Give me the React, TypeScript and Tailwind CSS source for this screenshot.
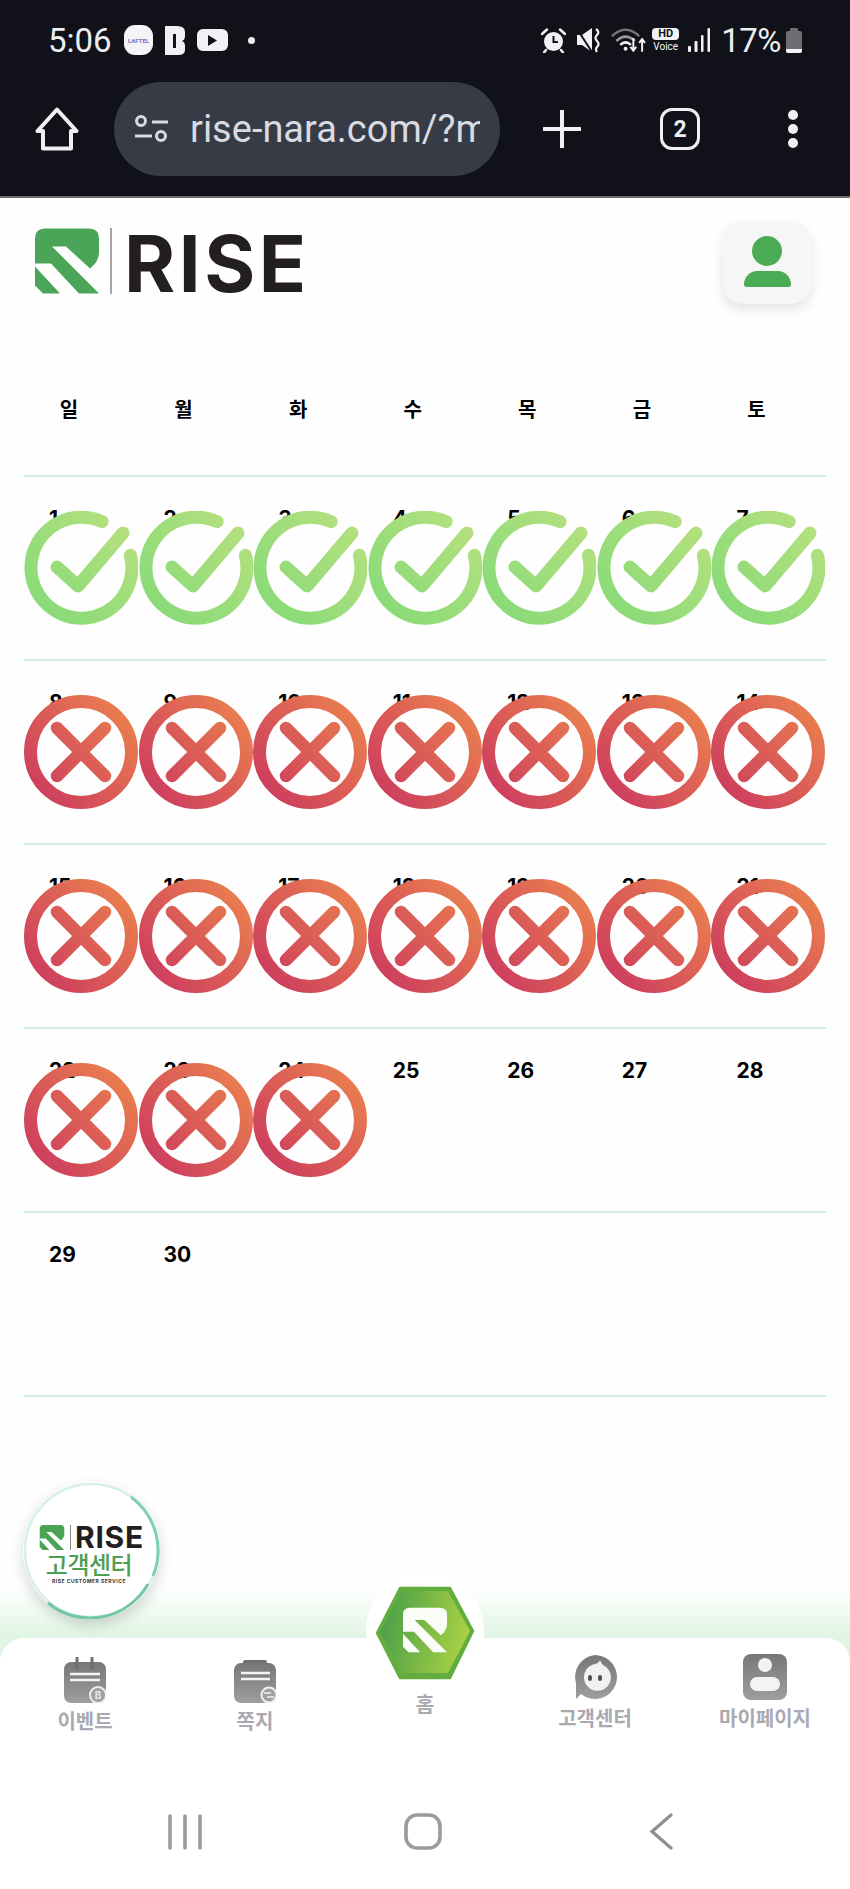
import type { ReactNode } from "react";

const kr = "font-['Noto_Sans_CJK_KR',sans-serif]";
const days = Array.from({ length: 35 }, (_, i) => (i < 30 ? i + 1 : null));
const weekdays = ["일", "월", "화", "수", "목", "금", "토"];
const weeks = [0, 1, 2, 3, 4].map((w) => days.slice(w * 7, w * 7 + 7));

const MARK =
  "M10 0H54Q64 0 64 10V24Q64 33 55 40L31 18H17L64 65H44L16 35H0V10Q0 0 10 0Z";
const MARK_FOOT = "M0 38L25 65H8L0 57Z";

function Mark({ className, fill }: { className: string; fill: string }) {
  return (
    <svg viewBox="0 0 64 65" className={className}>
      <path d={MARK} fill={fill} />
      <path d={MARK_FOOT} fill={fill} />
    </svg>
  );
}

function CheckIcon() {
  return (
    <svg viewBox="0 0 114 114" className="absolute left-0 top-[34px] w-[114px] h-[114px]">
      <defs>
        <linearGradient id="okGrad" gradientUnits="userSpaceOnUse" x1="10" y1="104" x2="104" y2="10">
          <stop offset="0" stopColor="#86da78" />
          <stop offset="1" stopColor="#b6e07e" />
        </linearGradient>
      </defs>
      <g fill="none" stroke="url(#okGrad)" strokeLinecap="round" strokeLinejoin="round">
        <path d="M78.2 10.6A50.5 50.5 0 1 0 106.4 44.2" strokeWidth="13" />
        <path d="M33 56L54 75L99 22" strokeWidth="13" />
      </g>
    </svg>
  );
}

function CrossIcon() {
  return (
    <svg viewBox="0 0 114 114" className="absolute left-0 top-[34px] w-[114px] h-[114px]">
      <defs>
        <linearGradient id="noGrad" gradientUnits="userSpaceOnUse" x1="14" y1="100" x2="104" y2="22">
          <stop offset="0" stopColor="#cd3d5e" />
          <stop offset="1" stopColor="#e97d4f" />
        </linearGradient>
      </defs>
      <g fill="none" stroke="url(#noGrad)" strokeLinecap="round">
        <circle cx="57" cy="57" r="50.5" strokeWidth="13" />
        <path d="M33 33L81 81M81 33L33 81" strokeWidth="12.5" />
      </g>
    </svg>
  );
}

function StatusBar() {
  return (
    <div className="h-[80px] flex items-center pl-[48px] pr-[48px] text-[#eceef2] font-[Roboto,sans-serif]">
      <span className="text-[33px] leading-none w-[76px]">5:06</span>
      {/* notification icons */}
      <div className="w-[29px] h-[30px] rounded-[11px] bg-[#f4f4f6] flex items-center justify-center">
        <span className="text-[6px] font-bold text-[#7a6fc4]">LAFTEL</span>
      </div>
      <svg viewBox="0 0 20 29" className="w-[20px] h-[29px] ml-[12px]">
        <path d="M0 0H12Q20 0 20 6V10Q20 14 17 15Q20 16 20 20V24Q20 29 13 29H0Z" fill="#f1f1f3" />
        <rect x="8" y="8" width="3" height="14" fill="#12121b" />
      </svg>
      <div className="w-[31px] h-[22px] ml-[12px] rounded-[6px] bg-[#f1f1f3] flex items-center justify-center">
        <svg viewBox="0 0 10 12" className="w-[9px] h-[11px]">
          <path d="M0 0L10 6L0 12Z" fill="#12121b" />
        </svg>
      </div>
      <div className="w-[7px] h-[7px] ml-[20px] rounded-full bg-[#eceef2]" />

      <div className="ml-auto flex items-center">
        {/* alarm */}
        <svg viewBox="0 0 25 25" className="w-[25px] h-[25px]">
          <circle cx="12.5" cy="13.5" r="9.5" fill="#f2f2f4" />
          <path d="M12.5 8V14H17" fill="none" stroke="#12121b" strokeWidth="2" />
          <path d="M1 6L6 1.5M24 6L19 1.5M5 22L3 24.5M20 22L22 24.5" stroke="#f2f2f4" strokeWidth="2.5" strokeLinecap="round" />
        </svg>
        {/* muted */}
        <svg viewBox="0 0 24 25" className="w-[24px] h-[25px] ml-[11px]">
          <path d="M0 7H5L15 0V24L5 17H0Z" fill="#f2f2f4" />
          <path d="M0 1L15 24" stroke="#12121b" strokeWidth="2" />
          <path d="M19 1Q23 4 20 7Q17 10 20 13Q23 16 20 19Q18 21 20 24" fill="none" stroke="#f2f2f4" strokeWidth="2.2" />
        </svg>
        {/* wifi */}
        <svg viewBox="0 0 36 26" className="w-[35px] h-[26px] ml-[10px]">
          <path d="M1 9Q15 -4 29 9" fill="none" stroke="#77777c" strokeWidth="2.6" />
          <path d="M5.5 14Q15 5 24.5 14" fill="none" stroke="#9a9a9e" strokeWidth="2.6" />
          <path d="M9.5 18Q15 13 20.5 18" fill="none" stroke="#f2f2f4" strokeWidth="2.6" />
          <circle cx="15" cy="22" r="2" fill="#f2f2f4" />
          <path d="M23 11V24M20 20L23 24L26 20" fill="none" stroke="#f2f2f4" strokeWidth="2" />
          <path d="M32 25V12M29 16L32 12L35 16" fill="none" stroke="#f2f2f4" strokeWidth="2" />
        </svg>
        {/* hd voice */}
        <div className="ml-[6px] w-[27px] flex flex-col items-center">
          <span className="w-[27px] h-[12px] rounded-[4px] bg-[#f2f2f4] text-[#12121b] text-[11px] font-bold leading-[12px] text-center">
            HD
          </span>
          <span className="text-[10px] leading-[11px] mt-[1px] text-[#f2f2f4]">Voice</span>
        </div>
        {/* signal */}
        <svg viewBox="0 0 22 24" className="w-[22px] h-[24px] ml-[9px]">
          <rect x="0" y="18" width="3" height="6" rx="1" fill="#f2f2f4" />
          <rect x="6.5" y="13" width="3" height="11" rx="1" fill="#f2f2f4" />
          <rect x="13" y="7" width="2.5" height="17" rx="1" fill="#f2f2f4" />
          <rect x="19.5" y="0" width="2.5" height="24" rx="1" fill="#f2f2f4" />
        </svg>
        <span className="text-[33px] leading-none ml-[11px] tracking-[-0.5px]">17%</span>
        {/* battery */}
        <div className="ml-[5px] w-[16px] flex flex-col items-center">
          <div className="w-[8px] h-[3px] rounded-t-[1px] bg-[#6d6d72]" />
          <div className="w-[16px] h-[22px] rounded-[2px] bg-[#6d6d72] flex flex-col justify-end overflow-hidden">
            <div className="h-[4px] bg-[#f2f2f4]" />
          </div>
        </div>
      </div>
    </div>
  );
}

function Toolbar() {
  return (
    <div className="h-[94px] mt-[2px] flex items-center pl-[35px] text-[#eceef2]">
      <svg viewBox="0 0 44 44" className="w-[44px] h-[44px]">
        <path
          d="M22 2.5L2.5 24H8V41.5H36V24H41.5Z"
          fill="none"
          stroke="#f0f0f2"
          strokeWidth="4"
          strokeLinejoin="round"
        />
      </svg>
      <div className="ml-[35px] w-[386px] h-[94px] rounded-[47px] bg-[#373b45] flex items-center pl-[20px] pr-[20px]">
        <svg viewBox="0 0 35 28" className="w-[35px] h-[28px] shrink-0">
          <g fill="none" stroke="#d8dbe2" strokeWidth="3">
            <circle cx="7" cy="6" r="4.5" />
            <path d="M18 7H34" />
            <path d="M1 21H18" />
            <circle cx="27" cy="21" r="4.5" />
          </g>
        </svg>
        <div className="ml-[21px] overflow-hidden whitespace-nowrap text-[38px] leading-[44px] text-[#d8dbe2] font-[Roboto,sans-serif]">
          rise-nara.com/?mode=1
        </div>
      </div>
      <svg viewBox="0 0 38 38" className="w-[38px] h-[38px] ml-[43px]">
        <path d="M19 1V37M1 19H37" stroke="#f0f0f2" strokeWidth="4" strokeLinecap="round" />
      </svg>
      <div className="ml-[79px] w-[40px] h-[42px] rounded-[12px] border-[3.5px] border-[#f0f0f2] flex items-center justify-center text-[23px] font-bold font-[Roboto,sans-serif] leading-none">
        2
      </div>
      <div className="ml-[88px] flex flex-col gap-[4px]">
        <div className="w-[10px] h-[10px] rounded-full bg-[#f0f0f2]" />
        <div className="w-[10px] h-[10px] rounded-full bg-[#f0f0f2]" />
        <div className="w-[10px] h-[10px] rounded-full bg-[#f0f0f2]" />
      </div>
    </div>
  );
}

function Calendar() {
  return (
    <div className="mx-[24px]">
      <div className="grid grid-cols-7 h-[137px] pt-[3px] border-b-2 border-[#d3ede3]">
        {weekdays.map((d) => (
          <div key={d} className={`w-[90px] flex items-center justify-center text-[20px] font-bold text-black ${kr}`}>
            {d}
          </div>
        ))}
      </div>
      {weeks.map((week, w) => (
        <div key={w} className="grid grid-cols-7 h-[184px] border-b-2 border-[#d3ede3]">
          {week.map((day, i) => (
            <div key={i} className="relative pl-[25px] pt-[28px]">
              {day && (
                <span className="text-[21px] leading-[28px] font-bold text-black font-[Inter,sans-serif]">{day}</span>
              )}
              {day && day <= 7 && <CheckIcon />}
              {day && day > 7 && day <= 24 && <CrossIcon />}
            </div>
          ))}
        </div>
      ))}
    </div>
  );
}

function SupportButton() {
  return (
    <div className="absolute left-[23px] -top-[103px] w-[137px] h-[137px] rounded-full bg-white shadow-[0_6px_14px_rgba(0,0,0,0.16)] z-10 flex flex-col items-center pr-[5px]">
      <svg viewBox="0 0 137 137" className="absolute inset-0 w-[137px] h-[137px]">
        <circle cx="68.5" cy="68.5" r="66.5" fill="none" stroke="#d6f0e6" strokeWidth="2.5" />
        <path d="M108 15A66.5 66.5 0 0 1 130 94" fill="none" stroke="#7fd0b2" strokeWidth="3" />
        <path d="M25 121A66.5 66.5 0 0 0 125 102" fill="none" stroke="#74c7a6" strokeWidth="3" />
      </svg>
      <div className="relative flex items-center mt-[43px] h-[25px] ml-[5px]">
        <Mark className="w-[26px] h-[25px]" fill="#4ba356" />
        <div className="w-[1px] h-[25px] bg-[#888] ml-[5px]" />
        <span className="ml-[4px] text-[30px] leading-[25px] font-bold tracking-[0.8px] text-[#231f20] font-[Inter,sans-serif]">
          RISE
        </span>
      </div>
      <span className={`relative mt-[2px] text-[24px] leading-[24px] font-medium tracking-[-0.5px] text-[#4c9f52] ${kr}`}>
        고객센터
      </span>
      <span className="relative mt-[2px] text-[5px] leading-[6px] font-bold tracking-[0.5px] text-[#333] font-[Inter,sans-serif]">
        RISE CUSTOMER SERVICE
      </span>
    </div>
  );
}

function EventIcon() {
  return (
    <svg viewBox="0 0 42 46" className="w-[42px] h-[46px]">
      <rect x="0" y="5" width="42" height="41" rx="7" fill="url(#navGrad)" />
      <path d="M13 1V11M28 1V11" stroke="#6f6f70" strokeWidth="3" strokeLinecap="round" />
      <path d="M6 17H36M6 23H36" stroke="#f4f4f4" strokeWidth="2.6" />
      <circle cx="34" cy="38" r="8" fill="#a0a0a0" stroke="#efefef" strokeWidth="2" />
      <text x="34" y="41.5" fontSize="10" fontWeight="700" textAnchor="middle" fill="#e8e8e8" fontFamily="Inter">
        B
      </text>
    </svg>
  );
}

function NoteIcon() {
  return (
    <svg viewBox="0 0 42 43" className="w-[42px] h-[43px]">
      <rect x="9" y="0" width="24" height="6" rx="2" fill="#707070" />
      <rect x="0" y="3" width="42" height="40" rx="7" fill="url(#navGrad)" />
      <path d="M7 13H36M7 19H36" stroke="#f4f4f4" strokeWidth="2.6" />
      <circle cx="35" cy="35" r="7.5" fill="#a0a0a0" stroke="#efefef" strokeWidth="2" />
      <path d="M30 33H37M33 37H40" stroke="#efefef" strokeWidth="1.6" />
    </svg>
  );
}

function ChatIcon() {
  return (
    <svg viewBox="0 0 44 45" className="w-[44px] h-[45px]">
      <path d="M22 0A22 22 0 1 1 8 39L3 44V28A22 22 0 0 1 22 0Z" fill="url(#navGrad)" />
      <path d="M22 9Q26 8 27 5Q28 8 30 10A13.5 13.5 0 1 1 22 9Z" fill="#f1f1f1" />
      <ellipse cx="17" cy="23" rx="2" ry="3" fill="#4c4c4c" />
      <ellipse cx="27" cy="23" rx="2" ry="3" fill="#4c4c4c" />
    </svg>
  );
}

function ProfileIcon() {
  return (
    <svg viewBox="0 0 44 46" className="w-[44px] h-[46px]">
      <rect x="0" y="0" width="44" height="46" rx="8" fill="url(#navGrad)" />
      <circle cx="22" cy="11" r="7" fill="#f3f3f3" />
      <rect x="7" y="23" width="30" height="14" rx="7" fill="#f3f3f3" />
    </svg>
  );
}

function NavItem({ icon, label, pt }: { icon: ReactNode; label: string; pt: string }) {
  return (
    <div className={`flex flex-col items-center ${pt}`}>
      <div className="h-[46px] flex items-end">{icon}</div>
      <span className={`mt-[6px] text-[20px] leading-[24px] font-bold text-[#a9a9b1] whitespace-nowrap ${kr}`}>
        {label}
      </span>
    </div>
  );
}

function BottomNav() {
  return (
    <div className="relative">
      <SupportButton />
      <svg className="absolute w-0 h-0">
        <defs>
          <linearGradient id="navGrad" x1="0" y1="0" x2="0" y2="1">
            <stop offset="0" stopColor="#777778" />
            <stop offset="1" stopColor="#9e9e9e" />
          </linearGradient>
          <linearGradient id="hexGrad" x1="0" y1="0.4" x2="1" y2="0.6">
            <stop offset="0" stopColor="#4a9f48" />
            <stop offset="1" stopColor="#add345" />
          </linearGradient>
        </defs>
      </svg>
      <div className="h-[77px] bg-gradient-to-b from-[#ffffff] to-[#e0f5e3] to-70%" />
      <div className="relative -mt-[24px] h-[251px] rounded-t-[24px] bg-white flex flex-col">
        <div className="grid grid-cols-5 h-[175px]">
          <NavItem icon={<EventIcon />} label="이벤트" pt="pt-[19px]" />
          <NavItem icon={<NoteIcon />} label="쪽지" pt="pt-[19px]" />
          <div className="relative flex flex-col items-center pt-[54px]">
            {/* home button sits over the top of the panel */}
            <div className="absolute -top-[66px] left-[26px] w-[118px] h-[118px] rounded-full bg-white flex items-center justify-center">
              <div className="relative w-[96px] h-[91px] mt-[2px]">
                <svg viewBox="-2 -2 100 95" className="absolute -left-[2px] -top-[2px] w-[100px] h-[95px]">
                  <path d="M23 1H73L96 44L73 91H23L0 46Z" fill="#63ad3f" stroke="#63ad3f" strokeWidth="2.5" strokeLinejoin="round" />
                  <path d="M25 4H71L93 44L71 86H25L3 45Z" fill="url(#hexGrad)" strokeLinejoin="round" />
                </svg>
                <Mark className="absolute left-[26px] top-[20px] w-[44px] h-[46px]" fill="#fbfdf8" />
              </div>
            </div>
            <span className={`text-[20px] leading-[24px] font-bold text-[#a9a9b1] ${kr}`}>홈</span>
          </div>
          <NavItem icon={<ChatIcon />} label="고객센터" pt="pt-[16px]" />
          <NavItem icon={<ProfileIcon />} label="마이페이지" pt="pt-[16px]" />
        </div>
        {/* android nav buttons */}
        <div className="flex items-center gap-[198px] pl-[165px]">
          <svg viewBox="0 0 40 36" className="w-[40px] h-[36px]">
            <path d="M5 2V34M20 2V34M35 2V34" stroke="#9b9b9f" strokeWidth="3.6" strokeLinecap="round" />
          </svg>
          <svg viewBox="0 0 40 37" className="w-[40px] h-[37px]">
            <rect x="3" y="2" width="34" height="33" rx="11" fill="none" stroke="#9b9b9f" strokeWidth="3.6" />
          </svg>
          <svg viewBox="0 0 40 37" className="w-[40px] h-[37px]">
            <path d="M30 2L11 18.5L30 35" fill="none" stroke="#8e8e92" strokeWidth="3.2" strokeLinecap="round" />
          </svg>
        </div>
      </div>
    </div>
  );
}

export default function App() {
  return (
    <div className="w-full h-[1889px] flex flex-col overflow-hidden bg-[#fefefe]">
      {/* Browser chrome */}
      <header className="h-[198px] shrink-0 bg-[#11111a] border-b-2 border-[#6a6a6e]">
        <StatusBar />
        <Toolbar />
      </header>

      {/* Site header */}
      <div className="h-[142px] shrink-0 flex items-start pt-[30px] pl-[35px]">
        <Mark className="w-[64px] h-[66px]" fill="#4ba558" />
        <div className="w-[2px] h-[66px] ml-[11px] bg-[#a5a5a5]" />
        <span className="ml-[12px] mt-[6px] h-[60px] text-[78px] leading-[60px] font-bold tracking-[3.5px] text-[#231f20] font-[Inter,sans-serif]">
          RISE
        </span>
        <div className="ml-auto mr-[38px] -mt-[7px] w-[90px] h-[83px] rounded-[22px] bg-[#f6f6f6] shadow-[0_6px_12px_rgba(0,0,0,0.10)] flex flex-col items-center pt-[15px]">
          <div className="w-[30px] h-[30px] rounded-full bg-[#4cab55]" />
          <div className="w-[47px] h-[16px] mt-[5px] rounded-t-[24px] rounded-b-[5px] bg-[#4cab55]" />
        </div>
      </div>

      <Calendar />

      <div className="flex-1" />
      <BottomNav />
    </div>
  );
}
